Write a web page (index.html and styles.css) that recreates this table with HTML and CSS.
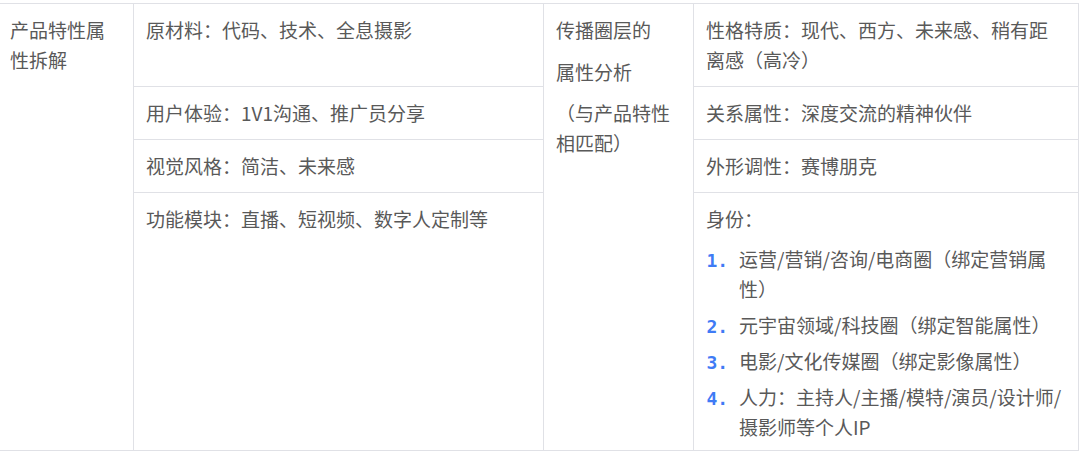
FILE: index.html
```html
<!DOCTYPE html>
<html lang="zh-CN">
<head>
<meta charset="utf-8">
<title>产品特性属性拆解</title>
<link rel="stylesheet" href="styles.css">
</head>
<body>
<table class="grid">
  <colgroup>
    <col class="c1"><col class="c2"><col class="c3"><col class="c4">
  </colgroup>
  <tbody>
    <tr>
      <td rowspan="4">产品特性属性拆解</td>
      <td>原材料：代码、技术、全息摄影</td>
      <td rowspan="4">
        <p class="line">传播圈层的</p>
        <p class="line gap">属性分析</p>
        <p class="gap2">（与产品特性相匹配）</p>
      </td>
      <td>性格特质：现代、西方、未来感、稍有距离感（高冷）</td>
    </tr>
    <tr>
      <td>用户体验：1V1沟通、推广员分享</td>
      <td>关系属性：深度交流的精神伙伴</td>
    </tr>
    <tr>
      <td>视觉风格：简洁、未来感</td>
      <td>外形调性：赛博朋克</td>
    </tr>
    <tr>
      <td>功能模块：直播、短视频、数字人定制等</td>
      <td class="last">
        <p>身份：</p>
        <ol class="ids">
          <li>运营/营销/咨询/电商圈（绑定营销属性）</li>
          <li>元宇宙领域/科技圈（绑定智能属性）</li>
          <li>电影/文化传媒圈（绑定影像属性）</li>
          <li>人力：主持人/主播/模特/演员/设计师/摄影师等个人IP</li>
        </ol>
      </td>
    </tr>
  </tbody>
</table>
</body>
</html>
```

FILE: styles.css
```css
html, body {
  margin: 0;
  padding: 0;
  background: #ffffff;
}
body {
  font-family: "Noto Sans CJK SC", "Noto Sans", sans-serif;
  font-size: 19px;
  line-height: 30px;
  color: #595959;
  overflow: hidden;
}
.grid {
  border-collapse: collapse;
  table-layout: fixed;
  width: 1081px;
  margin: 3px 0 0 -3px;
}
.c1 { width: 136px; }
.c2 { width: 410px; }
.c3 { width: 150px; }
.c4 { width: 385px; }
.grid td {
  border: 1px solid #e0e1e6;
  padding: 11px 12px;
  vertical-align: top;
  word-break: normal;
}
.grid td.last {
  padding-bottom: 8px;
}
.grid p {
  margin: 0;
}
.grid p.gap {
  margin-top: 12px;
}
.grid p.gap2 {
  margin-top: 11px;
}
.ids {
  margin: 10px 3px 0 0;
  padding: 0 0 0 33px;
  list-style: decimal;
}
.ids li {
  margin-top: 6px;
}
.ids li:first-child {
  margin-top: 0;
}
.ids li::marker {
  content: counter(list-item) ". ";
  color: #3f7bf5;
  font-family: "DejaVu Sans Mono", monospace;
  font-size: 18px;
  font-weight: bold;
}
```
